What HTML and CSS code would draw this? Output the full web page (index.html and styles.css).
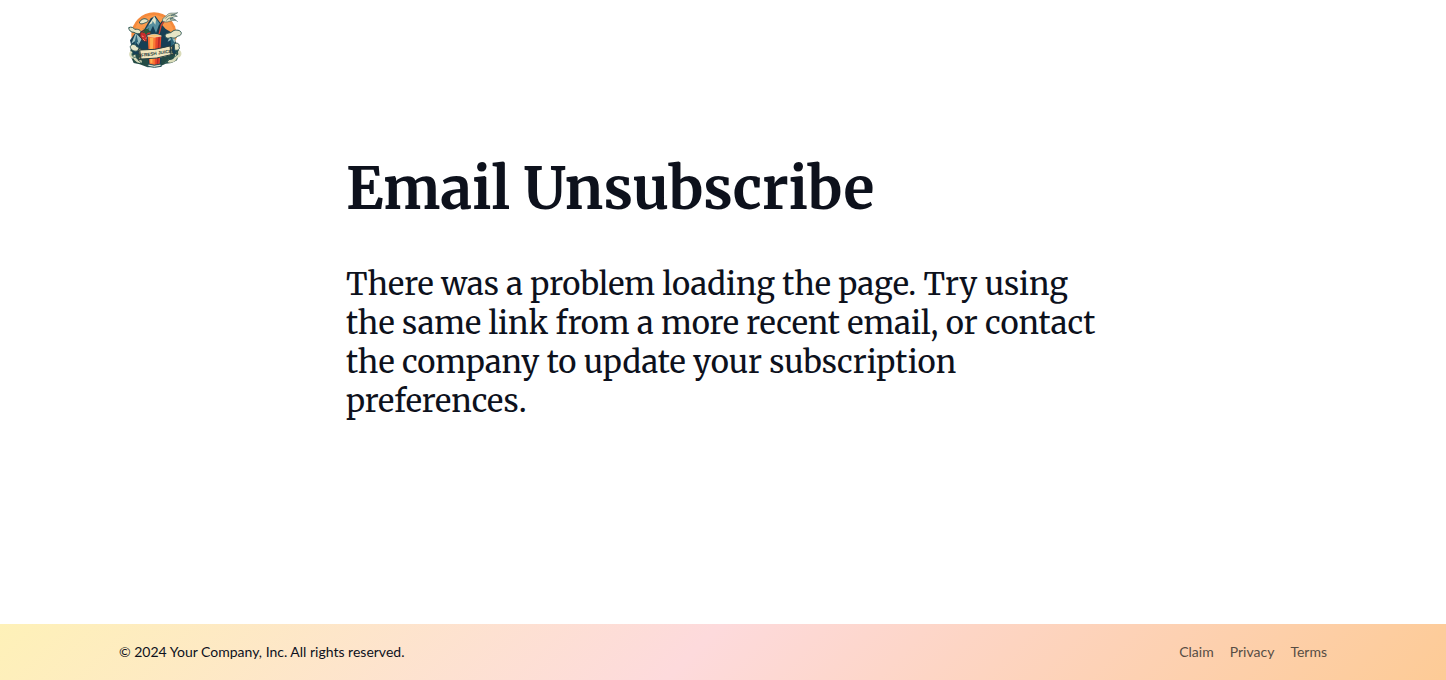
FILE: index.html
```html
<!DOCTYPE html>
<html lang="en">
<head>
<meta charset="utf-8">
<meta name="viewport" content="width=device-width, initial-scale=1">
<title>Email Unsubscribe</title>
<link rel="stylesheet" href="styles.css">
</head>
<body>
<header class="header">
  <div class="container">
    <a class="logo" href="#" aria-label="Fresh Juice">
      <svg viewBox="-3 1 210 210" width="70" height="70" aria-hidden="true">
        <circle cx="102" cy="94" r="68" fill="#f58a3c"/>
        <circle cx="102" cy="94" r="60" fill="#fb9a4b"/>
        <!-- foliage -->
        <path d="M31 138l14-16 28 14 60 0 26-16 18 12-2 24-4 14-16 8-18 2-16 8-38 3-24-9-18-4-8-18z" fill="#244b45"/>
        <!-- mountains -->
        <path d="M30 110L50 82l10 2 12-6 20-34 14-7 17 23 14 16 14 8 26 50-14 18H40z" fill="#163f55"/>
        <path d="M103 38L78 75l13 8 8-17 9 22 9-25 8 5z" fill="#568f9e"/>
        <path d="M103 38l-17 26 10-5 2-8 8 12 2-14z" fill="#e2e5c9"/>
        <path d="M47 88l-13 32 13-9 8 14 10-19zM153 91l-10 23 11-6 5 15 9-13z" fill="#9abfc0"/>
        <path d="M49 90l-7 38 11-14 6 22zM151 93l3 40 8-16 8 14z" fill="#2a6479"/>
        <!-- clouds -->
        <g fill="#e7e6c7" stroke="#315a58" stroke-width="3">
          <path d="M58 58c2-9 12-15 20-12 8 2 8 8 1 10-6 2-15 8-21 2z"/>
          <path d="M26 72c8-4 15 0 18 5 13-2 19 4 21 12-9 3-17 1-23-3-9 0-15-5-16-14z"/>
          <path d="M135 94c7-9 18-4 21-10 8-7 22-6 27 1 3 6-2 12-10 12-5 8-15 7-20 4-9 5-17 3-18-7z"/>
          <path d="M31 128c4-9 17-6 19 1 9 2 8 10 1 13-9 2-21-4-20-14zM163 121c8-6 17 0 14 8 5 8-5 13-13 10z"/>
        </g>
        <path d="M35 144c-8 10 0 20 8 15 3 14 16 16 22 14M176 142c9 8 2 19-7 15-2 13-14 18-25 15" fill="none" stroke="#d9dbb9" stroke-width="8"/>
        <path d="M38 146c-6 10 3 18 10 14M168 144c7 8 2 15-7 15M54 168l10 10M147 169l-13 10" fill="none" stroke="#33645d" stroke-width="3"/>
        <!-- straw and splash -->
        <path d="M115 98l7-34 14-20" fill="none" stroke="#173743" stroke-width="8"/>
        <path d="M116 96l8-32 11-16" fill="none" stroke="#ce4234" stroke-width="4"/>
        <path d="M128 53c-2-13 8-12 14-20 8-8 20-2 31-6-7 6-16 4-20 9 9 0 13-3 19 2-12 0-14 5-22 8 8-1 13 0 17 4-13-2-22 7-31 5z" fill="#e2dfbd" stroke="#486764" stroke-width="2"/>
        <path d="M135 45c10-12 17-10 31-13M139 50c8-8 13-8 20-8M150 47c12-5 16 2 23 7" fill="none" stroke="#355b5c" stroke-width="2"/>
        <!-- berry -->
        <path d="M60 88l12-8 19 4 3 14-7 19-18-6-9-13z" fill="#c92d2d" stroke="#433437" stroke-width="3"/>
        <path d="M66 88l9-9-8-4 14 2 7-4-4 8 12 5-13 1-5 7-4-7z" fill="#285b3c"/>
        <path d="M67 96l3 4m11-1l-3 7m-8 1l4 4" stroke="#ffb080" stroke-width="3"/>
        <!-- glass -->
        <path d="M79 94q25-11 49 0l-5 91q-19 9-38 0z" fill="#1b4050"/>
        <path d="M83 97q21-8 41 0l-5 85q-15 6-30 0z" fill="#e9472b"/>
        <path d="M84 98h23l-3 85-15-2z" fill="#fb7935"/>
        <path d="M90 102h10l-3 76-6-1z" fill="#ffb04f"/>
        <path d="M115 101h5l-5 79-5 1z" fill="#b92a2c"/>
        <path d="M82 97q21 7 42 0-20-10-42 0z" fill="#ffc06a" stroke="#e9e0bc" stroke-width="2"/>
        <path d="M85 181q17 7 37 0l2 7q-21 6-41 0z" fill="#dce0ca" stroke="#24505a" stroke-width="3"/>
        <!-- banner -->
        <path d="M54 138l9-5v32l-8 5 4-14zM151 131l8-5-4 14 6 13-10-1z" fill="#b7ab7b" stroke="#273e40" stroke-width="3"/>
        <path d="M59 139q46 2 91-12l3 26q-43 14-90 13z" fill="#f2e6bd" stroke="#273e40" stroke-width="3"/>
        <text class="logo-name" x="64" y="160" transform="rotate(-8 64 160)">FRESH JUICE</text>
      </svg>
    </a>
  </div>
</header>
<main class="main">
  <h1 class="title">Email Unsubscribe</h1>
  <p class="message">There was a problem loading the page. Try using the same link from a more recent email, or contact the company to update your subscription preferences.</p>
</main>
<footer class="footer">
  <div class="container footer-row">
    <p class="copyright">© 2024 Your Company, Inc. All rights reserved.</p>
    <nav class="links" aria-label="Footer">
      <a href="#">Claim</a>
      <a href="#">Privacy</a>
      <a href="#">Terms</a>
    </nav>
  </div>
</footer>
</body>
</html>
```
FILE: styles.css
```css
* { box-sizing: border-box; }
body {
  margin: 0;
  min-height: 100vh;
  display: flex;
  flex-direction: column;
  background: #fff;
  color: #0d111c;
  font-family: Lato, sans-serif;
}
.container {
  width: 100%;
  max-width: 1280px;
  margin: 0 auto;
  padding: 0 36px;
}
.header { padding: 4px 0; }
.logo { display: inline-block; vertical-align: top; }
.logo svg { display: block; }
.logo-name {
  font: bold 14px "Liberation Sans", sans-serif;
  fill: #263b40;
}
.main {
  flex: 1;
  width: 100%;
  max-width: 802px;
  margin: 0 auto;
  padding: 74px 24px;
  font-family: Merriweather, "DejaVu Serif Condensed", "DejaVu Serif", serif;
}
.title {
  margin: 0 0 38px;
  font-size: 57px;
  line-height: 74px;
  font-weight: 700;
}
.message {
  margin: 0;
  font-size: 31px;
  line-height: 39px;
}
.footer {
  padding: 16px 0;
  background: linear-gradient(135deg, #fef1b8, #fddadc 48%, #fdcb96);
  font-size: 14px;
  line-height: 24px;
}
.footer-row {
  display: flex;
  flex-wrap: wrap;
  justify-content: space-between;
  column-gap: 16px;
}
.copyright { margin: 0; }
.links { display: flex; gap: 16px; }
.links a { color: #574d44; text-decoration: none; }
```
